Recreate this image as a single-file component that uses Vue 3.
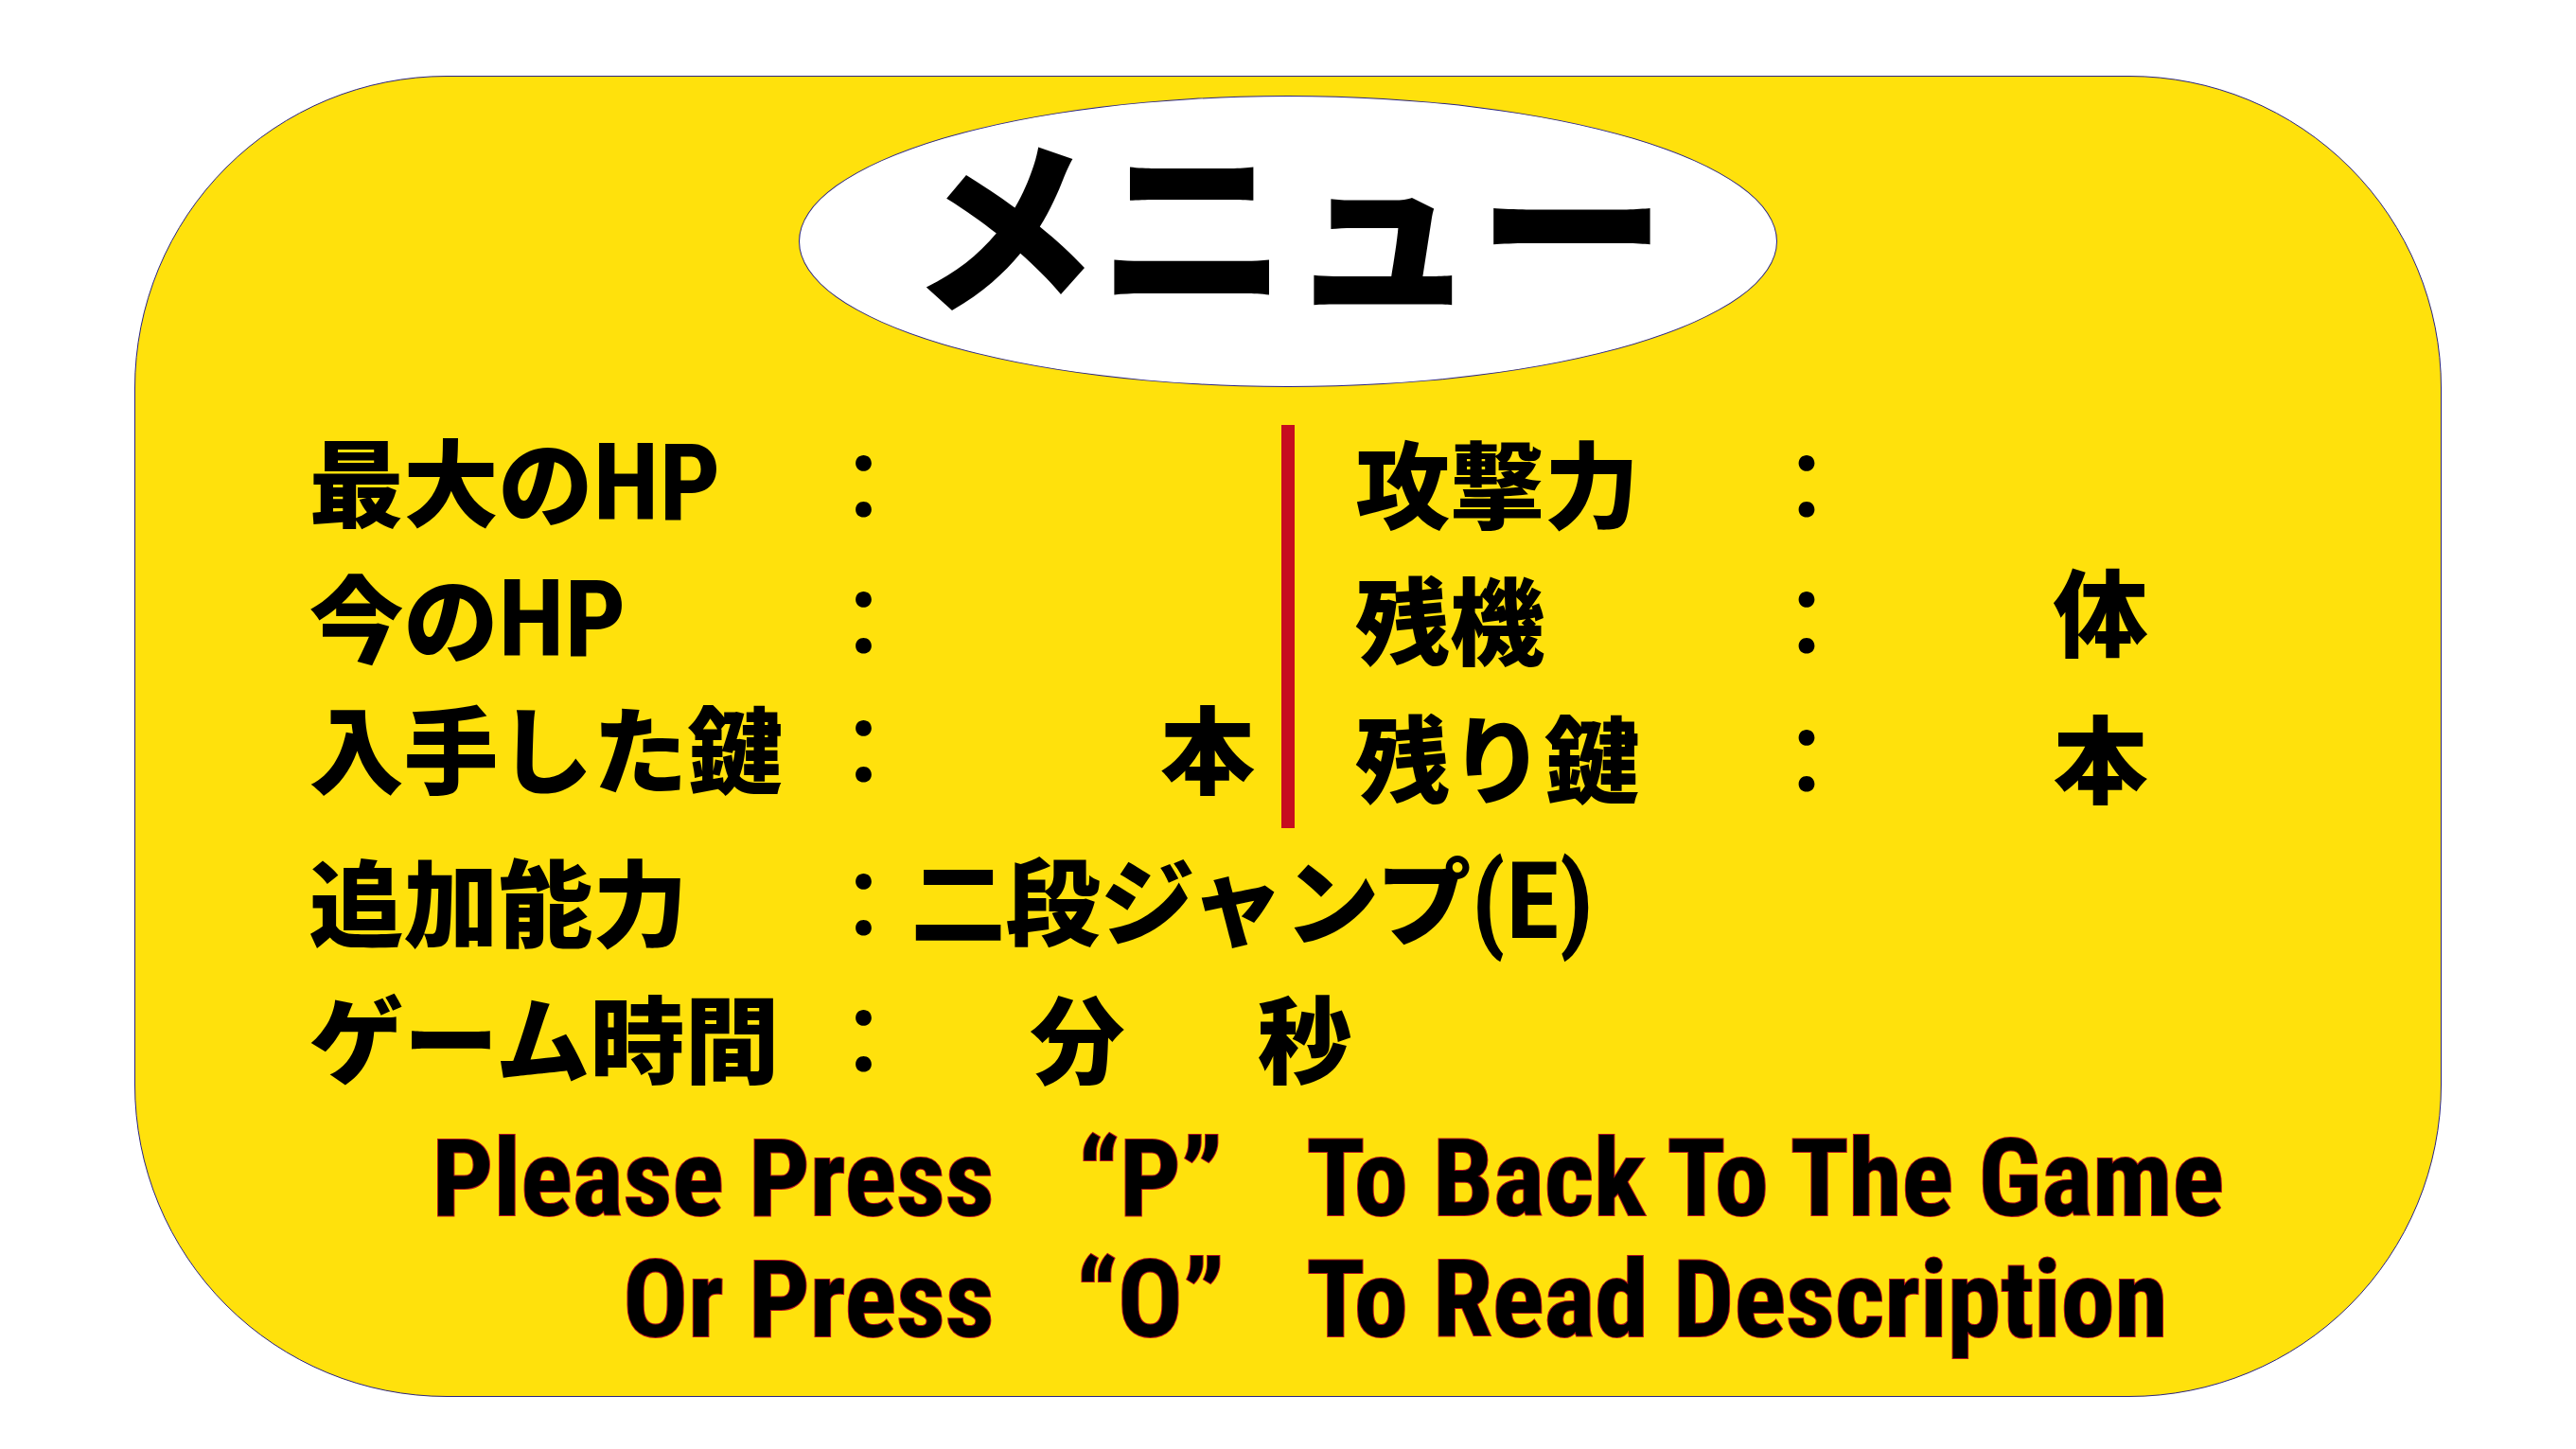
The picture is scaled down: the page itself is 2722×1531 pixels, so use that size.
<script setup>
const leftStats = [
  { label: '最大の', latin: 'HP' },
  { label: '今の', latin: 'HP' },
  { label: '入手した鍵', unit: '本' },
]

const rightStats = [
  { label: '攻撃力' },
  { label: '残機', unit: '体', raised: true },
  { label: '残り鍵', unit: '本' },
]

const hints = [
  { action: 'Please Press', key: '“P”', result: 'To Back To The Game' },
  { action: 'Or Press', key: '“O”', result: 'To Read Description' },
]
</script>

<template>
  <main class="panel">
    <h1 class="title">メニュー</h1>

    <section class="stats">
      <dl class="list list-left">
        <div v-for="stat in leftStats" :key="stat.label" class="row">
          <dt class="label">{{ stat.label }}<span v-if="stat.latin" class="latin">{{ stat.latin }}</span></dt>
          <dd class="colon">：</dd>
          <dd v-if="stat.unit" class="unit">{{ stat.unit }}</dd>
        </div>
      </dl>
      <div class="divider"></div>
      <dl class="list list-right">
        <div v-for="stat in rightStats" :key="stat.label" class="row">
          <dt class="label">{{ stat.label }}</dt>
          <dd class="colon">：</dd>
          <dd v-if="stat.unit" class="unit" :class="{ raised: stat.raised }">{{ stat.unit }}</dd>
        </div>
      </dl>
    </section>

    <dl class="list list-wide">
      <div class="row">
        <dt class="label">追加能力</dt>
        <dd class="colon">：</dd>
        <dd>二段ジャンプ<span class="latin">(E)</span></dd>
      </div>
      <div class="row">
        <dt class="label">ゲーム時間</dt>
        <dd class="colon">：</dd>
        <dd class="time"><span>分</span><span>秒</span></dd>
      </div>
    </dl>

    <section class="hints">
      <template v-for="hint in hints" :key="hint.key">
        <span class="action">{{ hint.action }}</span>
        <span class="key">{{ hint.key }}</span>
        <span>{{ hint.result }}</span>
      </template>
    </section>
  </main>
</template>

<style>
body {
  margin: 0;
  background: #fff;
}
</style>

<style scoped>
.panel {
  box-sizing: border-box;
  width: 89.6%;
  margin: 80px auto 0;
  padding: 20px 0 38px;
  border: 1px solid #2b2483;
  border-radius: 330px;
  background: #ffe10c;
  color: #000;
  font-family: "Noto Sans CJK JP", sans-serif;
  font-size: 100px;
  font-weight: 900;
  line-height: 100px;
  white-space: nowrap;
}

.title {
  box-sizing: border-box;
  width: 1034px;
  height: 308px;
  margin: 0 auto;
  padding-bottom: 52px;
  border: 1px solid #2b2483;
  border-radius: 50%;
  background: #fff;
  font-size: 200px;
  font-weight: 900;
  line-height: 254px;
  text-align: center;
}

.stats {
  display: grid;
  grid-template-columns: 1fr 14px 1fr;
  height: 426px;
  margin-top: 40px;
}

.divider {
  background: #c60e1f;
}

.list {
  display: grid;
  align-content: start;
  margin: 0;
}

.row {
  display: flex;
  align-items: center;
  height: 118px;
}

.row dd {
  margin: 0;
}

.list-left {
  grid-template-rows: 144px 136px 118px;
  padding: 0 28px 0 184px;
}

.list-right {
  grid-template-rows: 144px 146px 118px;
  padding: 0 310px 0 64px;
}

.list-wide {
  grid-template-rows: 144px 118px;
  padding-left: 184px;
  margin-top: 16px;
}

.label {
  width: 536px;
}

.list-right .label {
  width: 427px;
}

.colon {
  width: 100px;
  font-weight: 500;
}

.row .unit {
  margin-left: auto;
}

.raised {
  align-self: flex-start;
}

.latin {
  font-family: "Roboto Condensed", "Open Sans Condensed", "Noto Sans Condensed", Roboto, sans-serif;
  font-size: 114px;
  font-weight: 700;
  line-height: 100px;
}

.time {
  display: flex;
  gap: 140px;
  padding-left: 126px;
}

.hints {
  display: grid;
  grid-template-columns: 908px 330px 1fr;
  margin-top: 28px;
  font-family: "Roboto Condensed", "Open Sans Condensed", "Noto Sans Condensed", Roboto, sans-serif;
  font-size: 114px;
  font-weight: 700;
  line-height: 128px;
  -webkit-text-stroke: 2px #b3121d;
  paint-order: stroke fill;
}

.action {
  text-align: right;
}

.key {
  text-align: center;
}
</style>
